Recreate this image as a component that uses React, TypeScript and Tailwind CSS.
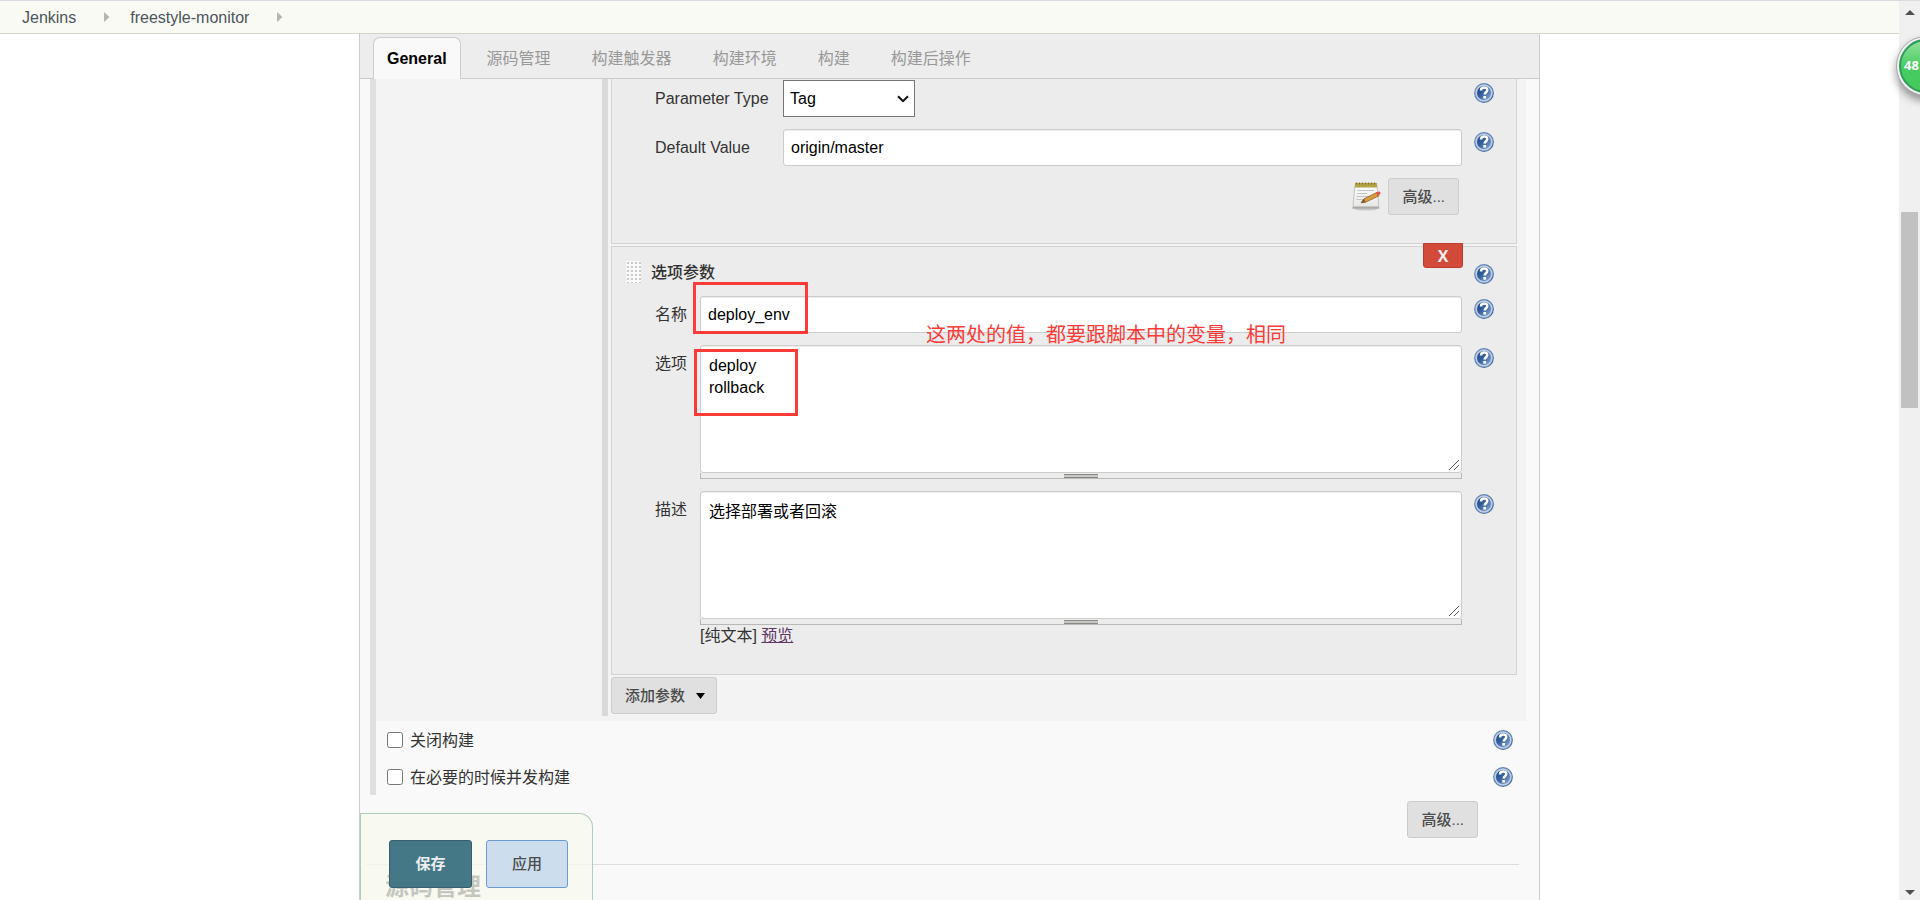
import type { ReactNode } from "react";

function HelpIcon() {
  return (
    <svg viewBox="0 0 20 20" className="block size-5" aria-hidden="true">
      <defs>
        <linearGradient id="helpFill" x1="0" y1="0" x2="1" y2="1">
          <stop offset="0" stopColor="#17407f" />
          <stop offset="0.45" stopColor="#34609f" />
          <stop offset="1" stopColor="#8fadd6" />
        </linearGradient>
        <linearGradient id="helpRim" x1="0" y1="0" x2="1" y2="1">
          <stop offset="0" stopColor="#6d8fbe" />
          <stop offset="1" stopColor="#3f669f" />
        </linearGradient>
      </defs>
      <circle cx="10" cy="10" r="9.3" fill="#bccde3" stroke="url(#helpRim)" strokeWidth="1.2" />
      <circle cx="10" cy="10" r="7" fill="url(#helpFill)" />
      <path d="M7 7.400c0-2 1.400-2.900 3.200-2.900s3.100 1 3.100 2.600c0 2.200-2.600 2.200-2.600 4.500" fill="none" stroke="#fff" strokeWidth="2.500" />
      <rect x="9.300" y="13" width="2.800" height="2.600" fill="#fff" />
    </svg>
  );
}

function HelpLink({ label }: { label: string }) {
  return (
    <a href="#help" aria-label={label} className="mt-[3px] block shrink-0">
      <HelpIcon />
    </a>
  );
}

function NotepadIcon() {
  return (
    <svg viewBox="0 0 29 29" className="h-[29px] w-[29px]" aria-hidden="true">
      <defs>
        <linearGradient id="paper" x1="0" y1="0" x2="0" y2="1">
          <stop offset="0" stopColor="#ffffff" />
          <stop offset="1" stopColor="#e4e4e2" />
        </linearGradient>
      </defs>
      <ellipse cx="14" cy="27.3" rx="11" ry="1.2" fill="#c9c9c9" />
      <path d="M3 3h22l2 23.500H0.800z" fill="url(#paper)" stroke="#b9b9b6" strokeWidth="0.8" />
      <path d="M1 24.500h25.800v2H0.800z" fill="#a9a9a7" />
      <rect x="3" y="1" width="22" height="4.500" fill="#b3a448" />
      <path d="M4.500 0.500v2M7.500 0.500v2M10.500 0.500v2M13.500 0.500v2M16.500 0.500v2M19.500 0.500v2M22.500 0.500v2" stroke="#837522" strokeWidth="1.200" />
      <path d="M5 8.500h17M5 11.500h10M4.500 14.500h13M4.500 17.500h7" stroke="#c4c7c9" strokeWidth="1" />
      <path d="M9 20.800l3-4L25 10.300l2 3.500-13.500 6.500z" fill="#d99a3e" stroke="#8a5a20" strokeWidth="0.700" />
      <path d="M9 20.800l3-4 1.500 3.500z" fill="#6b5a41" />
      <path d="M24 10.800l2.500-1.300c1.800-.4 2.600 1.800 1.500 2.800l-2.300 1.900z" fill="#e0524b" />
    </svg>
  );
}

const tabs = ["源码管理", "构建触发器", "构建环境", "构建", "构建后操作"];

function Crumb({ children }: { children: ReactNode }) {
  return (
    <li className="flex items-center">
      <a href="#crumb" className="pt-px text-[#4d545d]">{children}</a>
      <svg viewBox="0 0 6 10" className="mr-5 ml-7 h-[10px] w-[6px]" aria-hidden="true">
        <path d="M0 0L5.500 5L0 10z" fill="#b5b5b5" />
      </svg>
    </li>
  );
}

function Field({
  id,
  label,
  wide,
  children,
}: {
  id: string;
  label: string;
  wide?: boolean;
  children: ReactNode;
}) {
  return (
    <div className="flex items-start pr-[22px] pl-[43px]">
      <label htmlFor={id} className={wide ? "w-32 shrink-0 leading-[37px]" : "w-[45px] shrink-0 leading-[37px]"}>
        {label}
      </label>
      <div className="min-w-0 flex-1 pr-3">{children}</div>
      <HelpLink label={`${label} help`} />
    </div>
  );
}

function TextInput({ id, value }: { id: string; value: string }) {
  return (
    <input
      id={id}
      type="text"
      defaultValue={value}
      className="block h-[37px] w-full rounded-[3px] border border-[#ccc] bg-white px-[7px] text-black shadow-[inset_0_1px_1px_rgba(0,0,0,0.075)] outline-none"
    />
  );
}

function TextArea({ id, value }: { id: string; value: string }) {
  return (
    <>
      <div className="relative">
        <textarea
          id={id}
          defaultValue={value}
          className="block h-32 w-full resize-none rounded-[3px] border border-[#ccc] bg-white px-2 py-[9px] leading-[22px] text-black shadow-[inset_0_1px_1px_rgba(0,0,0,0.075)] outline-none"
        />
        <svg viewBox="0 0 10 10" className="pointer-events-none absolute right-[3px] bottom-[3px] size-[10px]" aria-hidden="true">
          <path d="M0 10L10 0M5 10L10 5" stroke="#555" strokeWidth="1" />
        </svg>
      </div>
      <div className="flex h-[6px] justify-center border-x border-b border-[#b8b8b4] pt-px">
        <div className="h-1 w-[34px] border-y border-[#8b8b86] bg-[#c6c6c4]" />
      </div>
    </>
  );
}

function GreyButton({ children }: { children: ReactNode }) {
  return (
    <button type="button" className="flex h-[37px] items-center rounded-[3px] border border-[#ccc] bg-[#e0e0e0] px-[13px] text-[15px] font-medium text-[#4b4b4b]">
      {children}
    </button>
  );
}

function CheckRow({ id, label }: { id: string; label: string }) {
  return (
    <div className="flex h-[37px] items-center pr-[13px] pl-[11px]">
      <input id={id} type="checkbox" className="size-4" />
      <label htmlFor={id} className="flex-1 pt-[3px] pl-[7px]">{label}</label>
      <a href="#help" aria-label={`${label} help`}>
        <HelpIcon />
      </a>
    </div>
  );
}

function Scrollbar() {
  return (
    <div className="flex w-[21px] shrink-0 flex-col items-center border-t border-[#d9dade] bg-[#f0f0f0]" aria-hidden="true">
      <svg viewBox="0 0 10 5" className="mt-[9px] h-[5px] w-[10px]">
        <path d="M0 5L5 0L10 5z" fill="#505050" />
      </svg>
      <div className="mt-[197px] h-[196px] w-[17px] bg-[#c1c1c1]" />
      <svg viewBox="0 0 10 5" className="mt-auto mb-[5px] h-[5px] w-[10px]">
        <path d="M0 0L5 5L10 0z" fill="#505050" />
      </svg>
    </div>
  );
}

export default function App() {
  return (
    <div className="relative flex h-screen overflow-hidden bg-white font-['Liberation_Sans','Noto_Sans_CJK_SC',sans-serif] text-base leading-[22px] text-[#333]">
      <div className="flex min-w-0 flex-1 flex-col">
        <nav className="shrink-0 border-t border-b border-t-[#d9dade] border-b-[#d3d3cb] bg-[#f8faf3]">
          <ul className="flex h-8 items-center pl-[22px]">
            <Crumb>Jenkins</Crumb>
            <Crumb>freestyle-monitor</Crumb>
          </ul>
        </nav>

        <main className="relative mx-auto flex min-h-0 w-full max-w-[1181px] flex-1 flex-col overflow-hidden border-x border-[#ccc] bg-[#f9f9f9]">
          <div className="flex shrink-0 items-end gap-[11px] border-b border-[#ccc] bg-[#ededed] pt-[3px] pl-[13px]">
            <button type="button" className="-mb-px h-[42px] rounded-t-[7px] border border-b-0 border-[#ccc] bg-[#f9f9f9] px-[13px] font-bold text-black">
              General
            </button>
            {tabs.map((tab) => (
              <button key={tab} type="button" className="h-[41px] px-[15px] pt-[2px] text-[#999]">
                {tab}
              </button>
            ))}
          </div>

          <form className="shrink-0" onSubmit={(event) => event.preventDefault()}>
            <div className="mr-[13px] ml-[10px] border-l-[6px] border-[#dfdfdf]">
              <div className="bg-[#f3f3f3] pb-[5px]">
                <div className="ml-[226px] border-l-[6px] border-[#d9d9d9] pr-[9px] pb-[2px] pl-[3px]">
                  <section className="flex flex-col gap-3 border border-t-0 border-[#d3d3d3] bg-[#ececec] pt-px pb-7">
                    <Field id="parameter-type" label="Parameter Type" wide>
                      <div className="relative w-[132px]">
                        <select id="parameter-type" className="block h-[37px] w-full appearance-none border border-[#767676] bg-white px-[6px] text-black">
                          <option>Tag</option>
                        </select>
                        <svg viewBox="0 0 12 8" className="pointer-events-none absolute top-[15px] right-[6px] h-2 w-3" aria-hidden="true">
                          <path d="M1 1.200l5 5 5-5" fill="none" stroke="#111" strokeWidth="2" />
                        </svg>
                      </div>
                    </Field>
                    <Field id="default-value" label="Default Value" wide>
                      <TextInput id="default-value" value="origin/master" />
                    </Field>
                    <div className="flex items-center justify-end gap-[7px] pr-[57px]">
                      <NotepadIcon />
                      <GreyButton>高级...</GreyButton>
                    </div>
                  </section>

                  <section className="relative mt-[2px] border border-[#d3d3d3] bg-[#ececec] pt-[14px] pb-[27px]">
                    <button type="button" className="absolute -top-1 right-[53px] h-[25px] w-10 rounded-b-[3px] border border-[#c03b2b] bg-[#d14a3a] font-['Open_Sans',sans-serif] text-base leading-none font-bold text-[#f3eeee]">
                      X
                    </button>
                    <div className="flex h-[22px] items-start pr-[22px] pl-[14px]">
                      <svg className="h-[22px] w-[15px]" aria-hidden="true">
                        <defs>
                          <pattern id="gripDots" width="4" height="4" patternUnits="userSpaceOnUse">
                            <rect width="4" height="4" fill="#fafafa" />
                            <rect x="1" y="1" width="2" height="2" fill="#c9c9c6" />
                          </pattern>
                        </defs>
                        <rect width="15" height="22" fill="url(#gripDots)" />
                      </svg>
                      <h3 className="flex-1 pt-px pl-[10px] font-medium">选项参数</h3>
                      <HelpLink label="选项参数 help" />
                    </div>
                    <div className="flex flex-col gap-3 pt-[13px]">
                      <Field id="choice-name" label="名称">
                        <TextInput id="choice-name" value="deploy_env" />
                      </Field>
                      <Field id="choice-options" label="选项">
                        <TextArea id="choice-options" value={"deploy\nrollback"} />
                      </Field>
                      <Field id="choice-description" label="描述">
                        <TextArea id="choice-description" value="选择部署或者回滚" />
                        <p>
                          [纯文本] <a href="#preview" className="text-[#5c3566] underline">预览</a>
                        </p>
                      </Field>
                    </div>
                    <div className="pointer-events-none absolute top-[35px] left-[81px] h-[52px] w-[115px] border-[3px] border-[#fb3b38]" />
                    <div className="pointer-events-none absolute top-[102px] left-[82px] h-[67px] w-[104px] border-[3px] border-[#fb3b38]" />
                    <p className="pointer-events-none absolute top-[74px] left-[314px] text-xl leading-7 whitespace-nowrap text-[#fb3b38]">
                      这两处的值，都要跟脚本中的变量，相同
                    </p>
                  </section>

                  <div className="mt-[2px] flex">
                    <GreyButton>
                      添加参数
                      <svg viewBox="0 0 9 6" className="mr-[-2px] ml-[11px] h-[6px] w-[9px]" aria-hidden="true">
                        <path d="M0 0h9L4.500 6z" fill="#000" />
                      </svg>
                    </GreyButton>
                  </div>
                </div>
              </div>
              <CheckRow id="disable-build" label="关闭构建" />
              <CheckRow id="concurrent-build" label="在必要的时候并发构建" />
            </div>

            <div className="mt-[6px] flex justify-end pr-[61px]">
              <GreyButton>高级...</GreyButton>
            </div>
            <hr className="mt-[26px] mr-5 ml-[6px] border-[#ddd]" />
            <h2 className="mt-[10px] pl-[25px] text-2xl leading-6 font-bold">源码管理</h2>
          </form>

          <div className="absolute bottom-0 left-0 flex h-[87px] gap-[14px] rounded-tr-[14px] border border-b-0 border-[#b0cdbb] bg-[#f7f9ef]/75 pt-[26px] pr-6 pl-7">
            <button type="button" className="h-12 w-[83px] rounded-[3px] border border-[#355f6d] bg-[#457887] text-[15px] font-bold text-[#eee]">
              保存
            </button>
            <button type="button" className="h-12 w-[82px] rounded-[3px] border border-[#6a9bd0] bg-[#ccdded] text-[15px] font-medium text-[#4b4b4b]">
              应用
            </button>
          </div>
        </main>
      </div>

      <Scrollbar />

      <div className="absolute top-9 -right-9 flex size-[60px] items-center rounded-full border border-[#a9a9a9] bg-[#f2f2f2] p-[2px] shadow-[0_5px_9px_rgba(0,0,0,0.4)]">
        <div className="flex size-full items-center rounded-full border-2 border-[#2d9b5d] bg-linear-to-b from-[#8fe09a] via-[#45cd62] to-[#45c95a] pb-[2px] pl-[3px] font-['Open_Sans',sans-serif] text-[13px] font-bold text-white">
          48
        </div>
      </div>
    </div>
  );
}
